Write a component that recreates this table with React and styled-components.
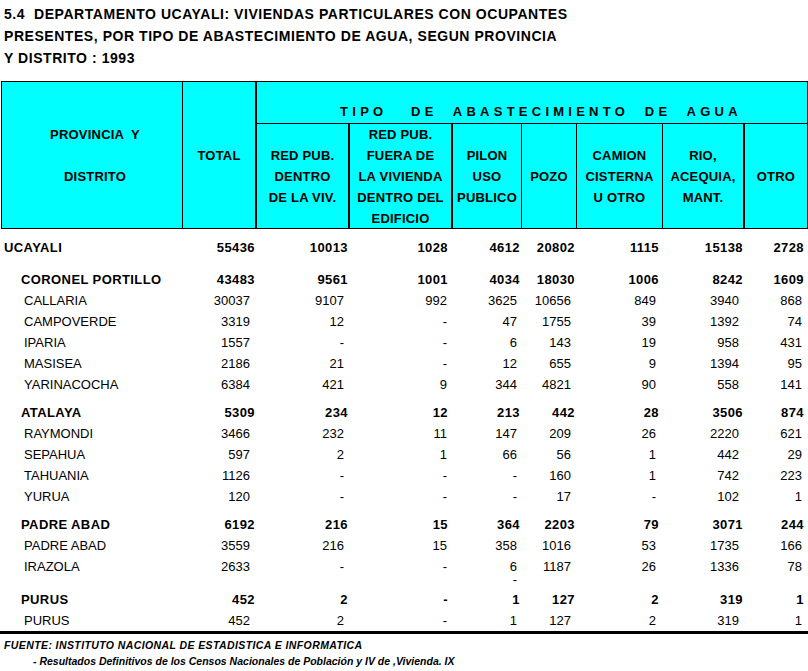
import React from 'react';
import styled, { createGlobalStyle } from 'styled-components';

const GlobalStyle = createGlobalStyle`
  html, body { margin: 0; padding: 0; background: #ffffff; }
  body { font-family: "Liberation Sans", Arial, sans-serif; color: #000; }
`;

const COLS = '181px 74px 93px 103px 69px 55px 86px 82px 62px';

const Page = styled.div`
  width: 808px;
  height: 671px;
  overflow: hidden;
  background: #fff;
`;

const Title = styled.div`
  padding: 3px 0 0 4px;
  font-weight: bold;
  font-size: 14px;
  letter-spacing: 0.55px;
  line-height: 22px;
  white-space: pre;
`;

const Header = styled.div`
  margin: 12px 0 0 1px;
  width: 805px;
  border: 1px solid #000;
  background: #00ffff;
  display: grid;
  grid-template-columns: ${COLS};
  grid-template-rows: 42px 104px;
  font-weight: bold;
  font-size: 13px;
  line-height: 21px;
`;

const HeadCell = styled.div`
  grid-column: ${(p) => p.$col};
  grid-row: ${(p) => p.$row};
  border-right: ${(p) => p.$right || 0}px solid #000;
  display: flex;
  align-items: center;
  justify-content: center;
  text-align: center;
  white-space: pre;
  letter-spacing: 0.2px;
  padding-left: ${(p) => p.$shift || 0}px;
  box-sizing: border-box;
`;

const TipoCell = styled.div`
  grid-column: 3 / 10;
  grid-row: 1;
  border-bottom: 1px solid #000;
  display: flex;
  align-items: flex-end;
  justify-content: center;
  padding: 0 0 1px 18px;
  letter-spacing: 4.25px;
  white-space: pre;
`;

const Body = styled.div`
  width: 808px;
  border-bottom: 3px solid #000;
`;

const Row = styled.div`
  display: grid;
  grid-template-columns: ${COLS};
  padding-left: 2px;
  font-size: 13px;
  font-weight: ${(p) => (p.$kind === 'dist' || p.$kind === 'note' ? 'normal' : 'bold')};
  letter-spacing: ${(p) => (p.$kind === 'dist' || p.$kind === 'note' ? 0 : 0.4)}px;
  line-height: ${(p) => (p.$kind === 'dist' ? 21 : p.$kind === 'note' ? 5 : 20)}px;
  height: ${(p) => (p.$kind === 'note' ? '5px' : 'auto')};
  padding-top: ${(p) => (p.$kind === 'dept' ? 9 : p.$kind === 'prov' ? 8 : 0)}px;
  padding-bottom: ${(p) => (p.$kind === 'dept' ? 4 : 0)}px;
`;

const NameCell = styled.div`
  padding-left: ${(p) => (p.$kind === 'dept' ? 2 : p.$kind === 'prov' ? 19 : 22)}px;
  white-space: nowrap;
`;

const NumCell = styled.div`
  text-align: right;
  padding-right: ${(p) => p.$pad}px;
  white-space: nowrap;
`;

const Footer = styled.div`
  padding-top: 3px;
  font-size: 10.5px;
  font-weight: bold;
  font-style: italic;
  line-height: 16px;
`;

const FootLine = styled.div`
  padding-left: ${(p) => p.$indent || 4}px;
  letter-spacing: ${(p) => p.$spacing || 0}px;
  white-space: pre;
`;

const BOLD_PAD = [2, 2, 5, 2, 2, 4, 2, 3];
const REG_PAD = [7, 6, 6, 5, 6, 7, 6, 5];

const rows = [
  { kind: 'dept', name: 'UCAYALI', v: [55436, 10013, 1028, 4612, 20802, 1115, 15138, 2728] },
  { kind: 'prov', name: 'CORONEL PORTILLO', v: [43483, 9561, 1001, 4034, 18030, 1006, 8242, 1609] },
  { kind: 'dist', name: 'CALLARIA', v: [30037, 9107, 992, 3625, 10656, 849, 3940, 868] },
  { kind: 'dist', name: 'CAMPOVERDE', v: [3319, 12, '-', 47, 1755, 39, 1392, 74] },
  { kind: 'dist', name: 'IPARIA', v: [1557, '-', '-', 6, 143, 19, 958, 431] },
  { kind: 'dist', name: 'MASISEA', v: [2186, 21, '-', 12, 655, 9, 1394, 95] },
  { kind: 'dist', name: 'YARINACOCHA', v: [6384, 421, 9, 344, 4821, 90, 558, 141] },
  { kind: 'prov', name: 'ATALAYA', v: [5309, 234, 12, 213, 442, 28, 3506, 874] },
  { kind: 'dist', name: 'RAYMONDI', v: [3466, 232, 11, 147, 209, 26, 2220, 621] },
  { kind: 'dist', name: 'SEPAHUA', v: [597, 2, 1, 66, 56, 1, 442, 29] },
  { kind: 'dist', name: 'TAHUANIA', v: [1126, '-', '-', '-', 160, 1, 742, 223] },
  { kind: 'dist', name: 'YURUA', v: [120, '-', '-', '-', 17, '-', 102, 1] },
  { kind: 'prov', name: 'PADRE ABAD', v: [6192, 216, 15, 364, 2203, 79, 3071, 244] },
  { kind: 'dist', name: 'PADRE ABAD', v: [3559, 216, 15, 358, 1016, 53, 1735, 166] },
  { kind: 'dist', name: 'IRAZOLA', v: [2633, '-', '-', 6, 1187, 26, 1336, 78] },
  { kind: 'note', name: '', v: ['', '', '', '-', '', '', '', ''] },
  { kind: 'prov', name: 'PURUS', v: [452, 2, '-', 1, 127, 2, 319, 1] },
  { kind: 'dist', name: 'PURUS', v: [452, 2, '-', 1, 127, 2, 319, 1] },
];

const subHeads = [
  { text: 'RED PUB.\nDENTRO\nDE LA VIV.', right: 2 },
  { text: 'RED PUB.\nFUERA DE\nLA VIVIENDA\nDENTRO DEL\nEDIFICIO', right: 2 },
  { text: 'PILON\nUSO\nPUBLICO', right: 1 },
  { text: 'POZO', right: 1 },
  { text: 'CAMION\nCISTERNA\nU OTRO', right: 1 },
  { text: 'RIO,\nACEQUIA,\nMANT.', right: 2 },
  { text: 'OTRO', right: 0 },
];

export default function App() {
  return (
    <Page>
      <GlobalStyle />
      <Title>
        {'5.4  DEPARTAMENTO UCAYALI: VIVIENDAS PARTICULARES CON OCUPANTES\nPRESENTES, POR TIPO DE ABASTECIMIENTO DE AGUA, SEGUN PROVINCIA\nY DISTRITO : 1993'}
      </Title>
      <Header>
        <HeadCell $col="1" $row="1 / 3" $right={1} $shift={6}>
          {'PROVINCIA  Y\n\nDISTRITO'}
        </HeadCell>
        <HeadCell $col="2" $row="1 / 3" $right={2}>
          TOTAL
        </HeadCell>
        <TipoCell>{'TIPO   DE  ABASTECIMIENTO  DE  AGUA'}</TipoCell>
        {subHeads.map((h, i) => (
          <HeadCell key={i} $col={String(i + 3)} $row="2" $right={h.right}>
            {h.text}
          </HeadCell>
        ))}
      </Header>
      <Body>
        {rows.map((r, i) => {
          const pads = r.kind === 'dist' || r.kind === 'note' ? REG_PAD : BOLD_PAD;
          return (
            <Row key={i} $kind={r.kind}>
              <NameCell $kind={r.kind}>{r.name}</NameCell>
              {r.v.map((val, j) => (
                <NumCell key={j} $pad={pads[j]}>
                  {val}
                </NumCell>
              ))}
            </Row>
          );
        })}
      </Body>
      <Footer>
        <FootLine $spacing={0.4}>FUENTE: INSTITUTO NACIONAL DE ESTADISTICA E INFORMATICA</FootLine>
        <FootLine $indent={33}>
          - Resultados Definitivos de los Censos Nacionales de Población y IV de ,Vivienda. IX
        </FootLine>
      </Footer>
    </Page>
  );
}
